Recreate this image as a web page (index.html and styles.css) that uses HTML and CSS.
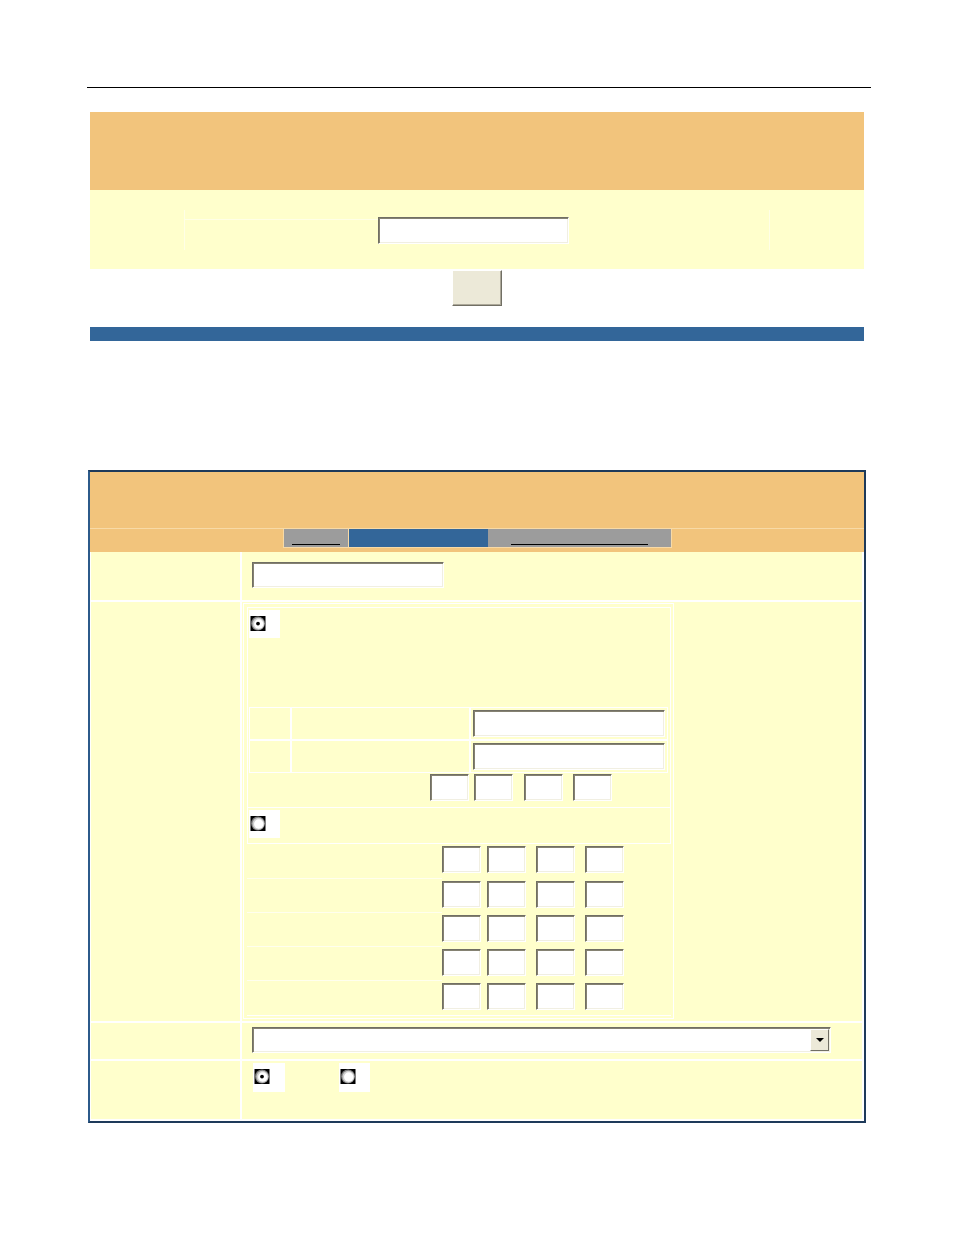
FILE: index.html
```html
<!DOCTYPE html>
<html>
<head>
<meta charset="utf-8">
<title>Form</title>
<link rel="stylesheet" href="styles.css">
</head>
<body>
<div class="page">
  <div class="rule"></div>

  <section class="panel1">
    <div class="p1-head"></div>
    <div class="p1-row">
      <div class="p1-table">
        <div class="p1-label"></div>
        <input type="text" class="txt w191">
      </div>
    </div>
    <div class="p1-actions"><button class="btn" type="button"></button></div>
    <div class="bluebar"></div>
  </section>

  <section class="panel2">
    <div class="p2-head"></div>
    <div class="tabrow">
      <div class="tabs">
        <div class="tab tab-a"><span class="uline ul-a"></span></div>
        <div class="tab-sep"></div>
        <div class="tab tab-b"></div>
        <div class="tab tab-c"><span class="uline ul-c"></span></div>
      </div>
    </div>

    <div class="form">
      <div class="cell"></div>
      <div class="cell val-1"><input type="text" class="txt w192"></div>

      <div class="cell"></div>
      <div class="cell">
        <div class="outer-box">
          <div class="inner-box">
            <div class="radio-area">
              <span class="rbox"><svg class="radio" viewBox="0 0 16 16" width="16" height="15"><rect width="16" height="16" fill="#000"/><circle cx="8" cy="8" r="7.4" fill="#7e7e7e"/><circle cx="8.4" cy="8.3" r="6.4" fill="#cfcfcf"/><circle cx="8.8" cy="8.5" r="5" fill="#fff"/><circle cx="8" cy="8" r="2" fill="#000"/></svg></span>
            </div>
            <div class="subtable">
              <div class="sc"></div><div class="sc"></div><div class="sc sc-in"><input type="text" class="txt w192 h27"></div>
              <div class="sc"></div><div class="sc"></div><div class="sc sc-in"><input type="text" class="txt w192 h27"></div>
            </div>
            <div class="quad-row">
              <div></div>
              <input type="text" class="txt sq">
              <input type="text" class="txt sq">
              <input type="text" class="txt sq">
              <input type="text" class="txt sq">
            </div>
            <div class="radio-row">
              <span class="rbox"><svg class="radio" viewBox="0 0 16 16" width="16" height="15"><rect width="16" height="16" fill="#000"/><circle cx="8" cy="8" r="7.4" fill="#7e7e7e"/><circle cx="8.4" cy="8.3" r="6.4" fill="#cfcfcf"/><circle cx="8.8" cy="8.5" r="5" fill="#fff"/></svg></span>
            </div>
          </div>
          <div class="grid-sec">
            <div class="gl"></div><input type="text" class="txt sq"><input type="text" class="txt sq"><input type="text" class="txt sq"><input type="text" class="txt sq"><div></div>
            <div class="gl"></div><input type="text" class="txt sq"><input type="text" class="txt sq"><input type="text" class="txt sq"><input type="text" class="txt sq"><div></div>
            <div class="gl"></div><input type="text" class="txt sq"><input type="text" class="txt sq"><input type="text" class="txt sq"><input type="text" class="txt sq"><div></div>
            <div class="gl"></div><input type="text" class="txt sq"><input type="text" class="txt sq"><input type="text" class="txt sq"><input type="text" class="txt sq"><div></div>
            <div class="gl gl-last"></div><input type="text" class="txt sq"><input type="text" class="txt sq"><input type="text" class="txt sq"><input type="text" class="txt sq"><div></div>
          </div>
        </div>
      </div>

      <div class="cell"></div>
      <div class="cell val-3">
        <div class="select">
          <div class="sel-field"></div>
          <div class="sel-btn"><span class="arrow"></span></div>
        </div>
      </div>

      <div class="cell"></div>
      <div class="cell val-4">
        <span class="rbox rbox-w"><svg class="radio" viewBox="0 0 16 16" width="16" height="15"><rect width="16" height="16" fill="#000"/><circle cx="8" cy="8" r="7.4" fill="#7e7e7e"/><circle cx="8.4" cy="8.3" r="6.4" fill="#cfcfcf"/><circle cx="8.8" cy="8.5" r="5" fill="#fff"/><circle cx="8" cy="8" r="2" fill="#000"/></svg></span>
        <span class="rbox"><svg class="radio" viewBox="0 0 16 16" width="16" height="15"><rect width="16" height="16" fill="#000"/><circle cx="8" cy="8" r="7.4" fill="#7e7e7e"/><circle cx="8.4" cy="8.3" r="6.4" fill="#cfcfcf"/><circle cx="8.8" cy="8.5" r="5" fill="#fff"/></svg></span>
      </div>
    </div>
  </section>
</div>
</body>
</html>
```
FILE: styles.css
```css
* { box-sizing: border-box; }
body { margin: 0; background: #fff; font-family: "Liberation Sans", Arial, sans-serif; font-size: 12px; }

.page { padding-top: 87px; }
.rule { margin-left: 87px; width: 784px; height: 1px; background: #000; }

/* generic XP-like controls */
.txt {
  display: block; margin: 0; padding: 0;
  background: #fff;
  border: 1px solid; border-color: #716F64 #fff #fff #716F64;
  box-shadow: inset 1px 1px 0 #858272, inset -1px -1px 0 #F1EFE2;
  font: inherit; outline: none;
}
.w191 { width: 191px; height: 27px; }
.w192 { width: 192px; height: 26px; }
.h27 { height: 27px; }
.sq { width: 39px; height: 27px; }

.btn {
  width: 50px; height: 36px; padding: 0; margin: 0;
  background: #ECE9D8;
  border: 1px solid; border-color: #fff #716F64 #716F64 #fff;
  box-shadow: inset -1px -1px 0 #ACA899;
}

/* panel 1 */
.panel1 { margin: 24px 0 0 90px; width: 774px; }
.p1-head { height: 78px; background: #F2C47C; }
.p1-row { height: 79px; background: #FFFFCC; padding-top: 20px; }
.p1-table {
  display: flex; align-items: center;
  margin-left: 94px; width: 586px; height: 40px;
  border-left: 1px solid #FFFFE6; border-right: 1px solid #FFFFE6;
}
.p1-label { align-self: flex-end; width: 193px; height: 31px; border-top: 1px solid #FFFFE6; }
.p1-actions { height: 37px; padding-top: 1px; display: flex; justify-content: center; }
.bluebar { margin-top: 21px; height: 14px; background: #336699; }

/* panel 2 */
.panel2 {
  margin: 129px 0 0 88px; width: 778px;
  border: 2px solid #1E3A5A; border-left-color: #2C5A8A;
}
.p2-head { height: 57px; background: #F2C47C; border-bottom: 1px solid #F8DAA6; }
.tabrow { height: 23px; background: #F2C47C; display: flex; justify-content: center; }
.tabs {
  display: flex; height: 19px; width: 389px;
  border: 1px solid #F8DAA6; border-top: 0;
}
.tab { height: 18px; display: flex; justify-content: center; align-items: flex-end; padding-bottom: 2px; }
.tab-a { width: 64px; background: #9C9C9C; }
.tab-sep { width: 1px; background: #F8DAA6; }
.tab-b { width: 139px; background: #336699; }
.tab-c { width: 183px; background: #9C9C9C; }
.uline { display: block; height: 1px; background: #000; }
.ul-a { width: 48px; }
.ul-c { width: 137px; }

.form {
  background: #fff;
  padding: 0 2px 2px 1px;
  display: grid;
  grid-template-columns: 149px 620px;
  grid-template-rows: 48px 419px 36px 58px;
  gap: 2px;
}
.cell { background: #FFFFCC; }
.val-1 { padding: 10px 0 0 10px; }

.outer-box {
  margin: 1px 0 0 1px; width: 431px; height: 416px;
  border: 1px solid #fff;
  padding: 3px 2px 2px 3px;
}
.inner-box { border: 1px solid #fff; height: 237px; }
.radio-area { height: 99px; padding: 2px 0 0 1px; }
.rbox { display: inline-block; vertical-align: top; width: 31px; height: 28px; background: #fff; padding: 6px 0 0 1px; }
.radio { display: block; }

.subtable {
  margin-left: 1px; width: 419px;
  background: #fff; padding: 1px; gap: 2px;
  display: grid; grid-template-columns: 40px 177px 196px; grid-template-rows: 31px 31px;
}
.sc { background: #FFFFCC; }
.sc-in { padding: 2px; }

.quad-row {
  height: 34px; padding-top: 1px;
  display: grid; grid-template-columns: 182px 44px 50px 49px 1fr; align-items: start;
}
.radio-row { height: 36px; border-top: 1px solid #fff; padding: 2px 0 0 1px; }

.grid-sec {
  height: 172px; border-bottom: 1px solid #fff;
  display: grid;
  grid-template-columns: 195px 45px 49px 49px 39px 1fr;
  grid-template-rows: 35px 34px 34px 34px 34px;
  align-items: start;
}
.grid-sec .txt { margin-top: 2px; }
.gl { height: 100%; border-bottom: 1px solid #FFFFEE; }
.gl-last { border-bottom: 0; }

.val-3 { padding: 4px 0 0 10px; }
.select {
  display: flex; width: 579px; height: 26px;
  background: #fff;
  border: 1px solid; border-color: #716F64 #fff #fff #716F64;
  box-shadow: inset 1px 1px 0 #858272, inset -1px -1px 0 #F1EFE2;
  padding: 1px;
}
.sel-field { flex: 1; }
.sel-btn {
  width: 19px; height: 22px;
  background: #ECE9D8;
  border: 1px solid; border-color: #fff #716F64 #716F64 #fff;
  display: flex; justify-content: center; align-items: center;
}
.arrow { width: 0; height: 0; border-left: 4px solid transparent; border-right: 4px solid transparent; border-top: 4px solid #000; }

.val-4 { padding: 2px 0 0 11px; display: flex; align-items: flex-start; gap: 54px; }
.val-4 .rbox { height: 29px; }
.rbox-w { width: 32px; }
```
